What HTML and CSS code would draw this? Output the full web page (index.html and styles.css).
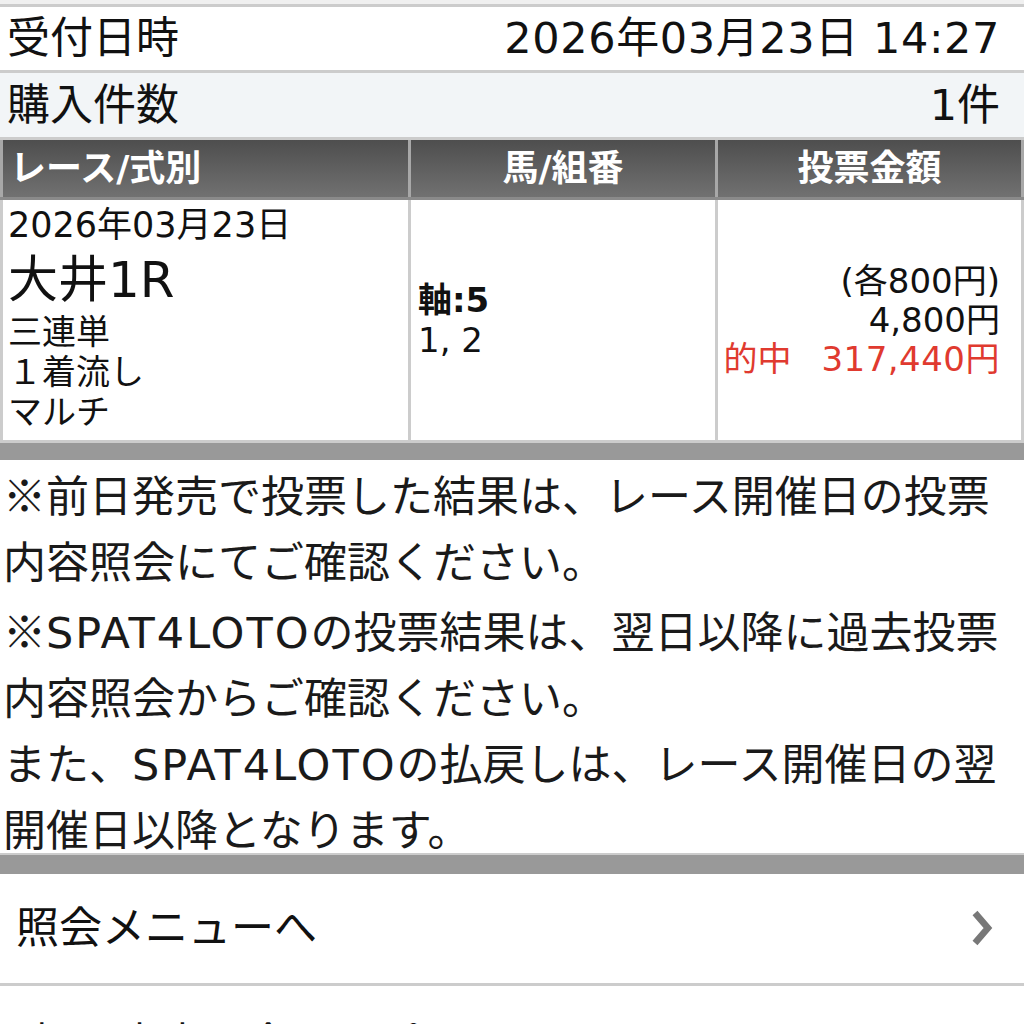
FILE: index.html
```html
<!DOCTYPE html>
<html lang="ja">
<head>
<meta charset="utf-8">
<link rel="stylesheet" href="styles.css">
</head>
<body>
<div class="topstrip"></div>
<div class="info-row">
  <span>受付日時</span>
  <span class="wide">2026年03月23日 14:27</span>
</div>
<div class="info-row alt">
  <span>購入件数</span>
  <span>1件</span>
</div>
<div class="tbl-head">
  <div class="th th-left">レース/式別</div>
  <div class="th">馬/組番</div>
  <div class="th">投票金額</div>
</div>
<div class="tbl-body">
  <div class="td td-race">
    <div class="race-date">2026年03月23日</div>
    <div class="race-name">大井1R</div>
    <div class="race-line">三連単</div>
    <div class="race-line">１着流し</div>
    <div class="race-line">マルチ</div>
  </div>
  <div class="td td-horse">
    <div class="horse-axis">軸:5</div>
    <div class="horse-line">1, 2</div>
  </div>
  <div class="td td-amount">
    <div class="amt-line">(各800円)</div>
    <div class="amt-line">4,800円</div>
    <div class="amt-line hit"><span>的中</span><span class="hit-val">317,440円</span></div>
  </div>
</div>
<div class="graybar"></div>
<div class="notes">
<span class="cjk">※</span>前日発売で投票した結果は、レース開催日の投票<br>内容照会にてご確認ください。<br><span class="cjk">※</span><span class="latin">SPAT4LOTO</span>の投票結果は、翌日以降に過去投票<br>内容照会からご確認ください。<br>また、<span class="latin">SPAT4LOTO</span>の払戻しは、レース開催日の翌<br>開催日以降となります。
</div>
<div class="graybar graybar-2"></div>
<div class="menu-row">
  <span>照会メニューへ</span>
  <svg class="chev" width="24" height="40" viewBox="0 0 24 40"><polyline points="5,4 18,19 5,34" fill="none" stroke="#787878" stroke-width="6.5" stroke-linejoin="miter"/></svg>
</div>
<div class="menu-row next-row">
  <span>投票内容照会トップへ</span>
</div>
</body>
</html>
```

FILE: styles.css
```css
html, body {
  margin: 0;
  padding: 0;
  background: #ffffff;
}
body {
  font-family: "DejaVu Sans", "Noto Sans CJK JP", sans-serif;
  color: #111111;
  width: 1024px;
  overflow: hidden;
}
.cjk {
  font-family: "Noto Sans CJK JP", sans-serif;
}
.wide {
  letter-spacing: 0.6px;
}
.latin {
  letter-spacing: 2px;
}
.topstrip {
  height: 4px;
  background: #f0f0f0;
  border-bottom: 3px solid #cccccc;
}
.info-row {
  height: 63px;
  display: flex;
  justify-content: space-between;
  align-items: center;
  padding: 0 24px 0 7px;
  font-size: 43px;
  line-height: 1;
  border-bottom: 3px solid #cccccc;
  background: #ffffff;
}
.info-row.alt {
  height: 64px;
  background: #f2f5f7;
}
.tbl-head {
  display: grid;
  grid-template-columns: 405px 304px 303px;
  column-gap: 3px;
  padding: 0 3px 0 3px;
  background: #a8a8a8;
  border-bottom: 3px solid #8a8a8a;
}
.th {
  height: 57px;
  background: linear-gradient(#4e4e4e, #717171);
  color: #ffffff;
  font-weight: bold;
  font-size: 36px;
  display: flex;
  align-items: center;
  justify-content: center;
  line-height: 1;
}
.th-left {
  justify-content: flex-start;
  padding-left: 7px;
}
.tbl-body {
  display: grid;
  grid-template-columns: 405px 304px 303px;
  column-gap: 3px;
  padding: 0 3px;
  background: #cccccc;
  border-bottom: 3px solid #cccccc;
}
.td {
  background: #ffffff;
  height: 240px;
  box-sizing: border-box;
}
.td-race {
  padding: 2px 0 0 5px;
}
.race-date {
  font-size: 35px;
  line-height: 46px;
}
.race-name {
  font-size: 50px;
  line-height: 64px;
}
.race-line {
  font-size: 34px;
  line-height: 40px;
}
.td-horse {
  display: flex;
  flex-direction: column;
  justify-content: center;
  padding: 0 0 0 7px;
}
.horse-axis {
  font-size: 34px;
  font-weight: bold;
  line-height: 40px;
}
.horse-line {
  font-size: 34px;
  line-height: 40px;
}
.td-amount {
  display: flex;
  flex-direction: column;
  justify-content: center;
  align-items: flex-end;
  padding: 0 21px 0 0;
}
.amt-line {
  font-size: 34px;
  line-height: 39px;
  white-space: nowrap;
}
.hit {
  color: #e03a2f;
}
.hit-val {
  margin-left: 30px;
  letter-spacing: 0.5px;
}
.graybar {
  height: 17px;
  background: #999999;
}
.notes {
  font-size: 43px;
  line-height: 66px;
  padding: 0 0 0 3px;
  height: 395px;
  box-sizing: border-box;
  white-space: nowrap;
  border-bottom: 2px solid #cccccc;
  color: #1a1a1a;
}
.graybar-2 {
  height: 19px;
}
.menu-row {
  height: 109px;
  display: flex;
  justify-content: space-between;
  align-items: center;
  padding: 0 30px 0 16px;
  font-size: 43px;
  line-height: 1;
  border-bottom: 3px solid #cccccc;
}
.chev {
  display: block;
}
.next-row {
  height: 116px;
  border-bottom: none;
  padding-left: 32px;
}
```
